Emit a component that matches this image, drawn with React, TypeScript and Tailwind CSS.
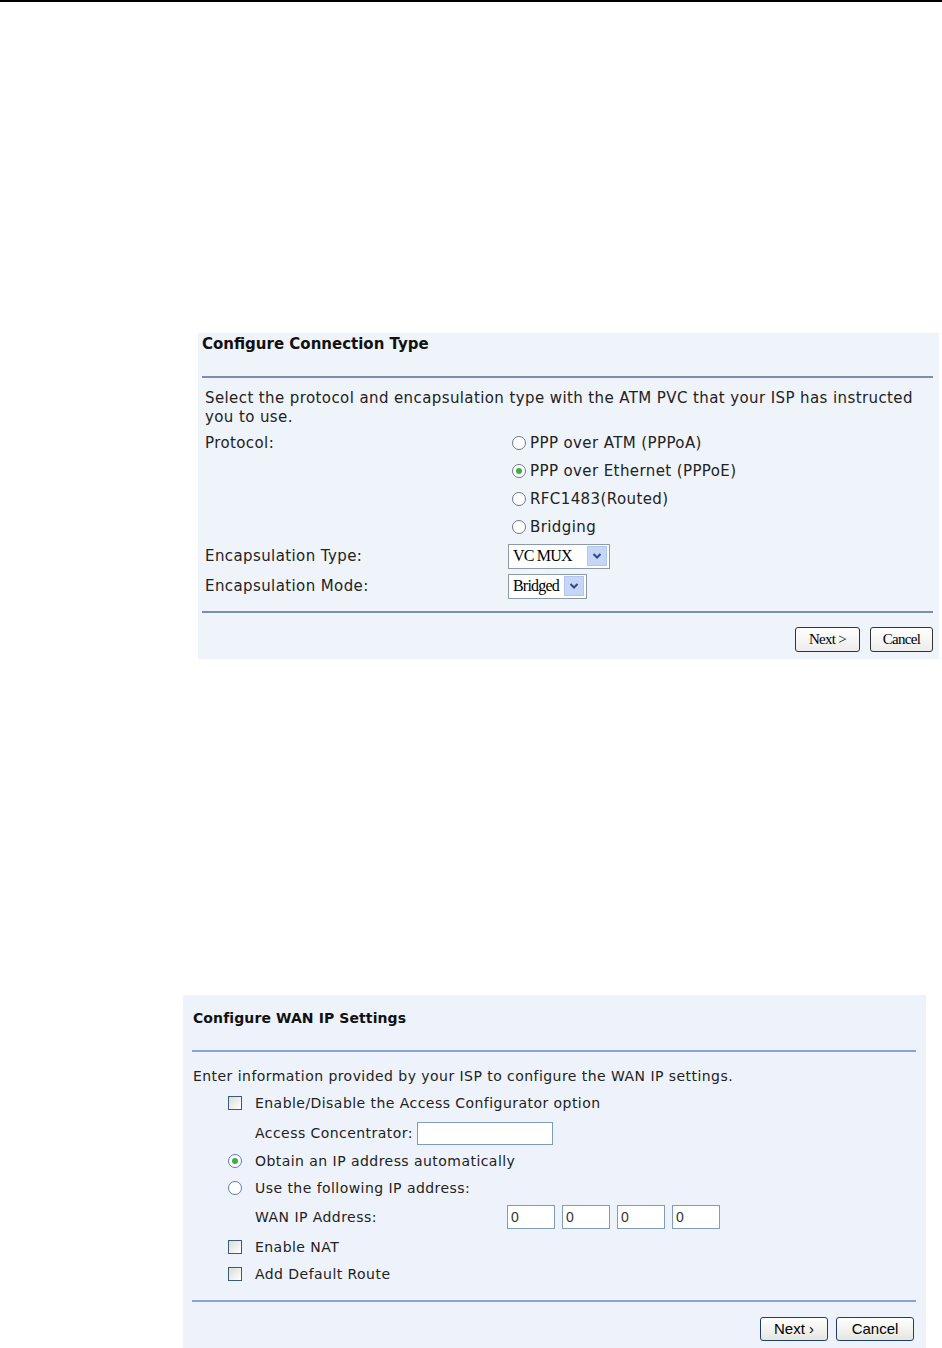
import React from "react";

const Radio = ({ checked, blue }: { checked?: boolean; blue?: boolean }) => (
  <span
    className={`inline-flex shrink-0 items-center justify-center w-[14px] h-[14px] rounded-full border bg-white ${
      blue ? "border-[#5b7fa6]" : "border-[#6f7a86]"
    }`}
  >
    {checked && <span className="w-[6px] h-[6px] rounded-full bg-[#3fae3f]" />}
  </span>
);

const Checkbox = () => (
  <span className="inline-block shrink-0 w-[14px] h-[14px] border border-[#3b5a7a] bg-gradient-to-br from-[#dcdcd6] to-[#ffffff]" />
);

const Chevron = () => (
  <svg width="10" height="8" viewBox="0 0 10 8">
    <path d="M1.5 2 L5 5.5 L8.5 2" stroke="#2a4b8c" strokeWidth="2" fill="none" />
  </svg>
);

const Select1 = ({ text, w }: { text: string; w: string }) => (
  <div className={`flex items-center h-[25px] border border-[#8a9aa8] bg-white tracking-normal ${w}`} style={{ fontFamily: '"Liberation Serif", serif' }}>
    <span className="pl-[4px] text-[16px] tracking-[-0.8px] text-black flex-1 leading-none">{text}</span>
    <span className="mr-[2px] w-[20px] h-[20px] flex items-center justify-center bg-[#c6d6f5] border border-[#b3c6ee]">
      <Chevron />
    </span>
  </div>
);

export default function App() {
  return (
    <div className="w-[942px] h-[1348px] bg-white relative overflow-hidden" style={{ fontFamily: '"DejaVu Sans", Verdana, sans-serif' }}>
      <div className="h-[2px] bg-black w-full" />

      {/* Panel 1 */}
      <div className="mt-[331px] ml-[198px] w-[741px] h-[326px] bg-[#eff3fa] flex flex-col text-[#222]">
        <div className="pl-[4px] pt-[1px] h-[43px] text-[15px] leading-[20px] font-bold text-[#111]">Configure Connection Type</div>
        <div className="ml-[4px] mr-[6px] h-[2px] bg-[#7d8fa8]" />
        <div className="mt-[11px] pl-[7px] pr-[10px] text-[15px] leading-[19px] tracking-[0.4px]">
          Select the protocol and encapsulation type with the ATM PVC that your ISP has instructed you to use.
        </div>
        <div className="mt-[2px] pl-[7px] grid grid-cols-[307px_1fr] text-[15px] tracking-[0.4px]">
          <div className="h-[28px] flex items-center">Protocol:</div>
          <div className="h-[28px] flex items-center gap-[4px]"><Radio /><span>PPP over ATM (PPPoA)</span></div>
          <div className="h-[28px]" />
          <div className="h-[28px] flex items-center gap-[4px]"><Radio checked /><span>PPP over Ethernet (PPPoE)</span></div>
          <div className="h-[28px]" />
          <div className="h-[28px] flex items-center gap-[4px]"><Radio /><span>RFC1483(Routed)</span></div>
          <div className="h-[28px]" />
          <div className="h-[28px] flex items-center gap-[4px]"><Radio /><span>Bridging</span></div>
          <div className="h-[30px] flex items-center">Encapsulation Type:</div>
          <div className="h-[30px] flex items-center ml-[-4px]"><Select1 text="VC MUX" w="w-[102px]" /></div>
          <div className="h-[30px] flex items-center">Encapsulation Mode:</div>
          <div className="h-[30px] flex items-center ml-[-4px]"><Select1 text="Bridged" w="w-[79px]" /></div>
        </div>
        <div className="mt-[10px] ml-[4px] mr-[6px] h-[2px] bg-[#7d8fa8]" />
        <div className="mt-[14px] flex justify-end gap-[10px] pr-[6px]" style={{ fontFamily: '"Liberation Serif", serif' }}>
          <button className="w-[65px] h-[25px] border border-[#333] rounded-[3px] bg-gradient-to-b from-white to-[#ececec] text-[15px] tracking-[-0.7px] text-black">Next &gt;</button>
          <button className="w-[63px] h-[25px] border border-[#333] rounded-[3px] bg-gradient-to-b from-white to-[#ececec] text-[15px] tracking-[-0.7px] text-black">Cancel</button>
        </div>
      </div>

      {/* Panel 2 */}
      <div className="mt-[336px] ml-[183px] w-[743px] h-[353px] bg-[#eef2fa] flex flex-col text-[#222]">
        <div className="pl-[10px] pt-[13px] h-[55px] text-[14px] leading-[20px] font-bold text-[#111] tracking-[0.1px]">Configure WAN IP Settings</div>
        <div className="ml-[9px] mr-[10px] h-[2px] bg-[#8ba2d8]" />
        <div className="mt-[14px] pl-[10px] text-[14px] leading-[20px] tracking-[0.45px]">
          Enter information provided by your ISP to configure the WAN IP settings.
        </div>
        <div className="mt-[3px] pl-[45px] text-[14px] tracking-[0.45px] flex flex-col">
          <div className="h-[28px] flex items-center gap-[13px]"><Checkbox /><span>Enable/Disable the Access Configurator option</span></div>
          <div className="h-[32px] flex items-center pl-[27px]">
            <span>Access Concentrator:</span>
            <span className="ml-[4px] w-[136px] h-[23px] bg-white border border-[#7f9db9]" />
          </div>
          <div className="h-[24px] flex items-center gap-[13px]"><Radio checked blue /><span>Obtain an IP address automatically</span></div>
          <div className="h-[30px] flex items-center gap-[13px]"><Radio blue /><span>Use the following IP address:</span></div>
          <div className="h-[28px] flex items-center pl-[27px]">
            <span className="w-[252px]">WAN IP Address:</span>
            <div className="flex gap-[7px]">
              {[0, 1, 2, 3].map((i) => (
                <span key={i} className="w-[48px] h-[24px] bg-white border border-[#7f9db9] flex items-center pl-[3px] text-[14px] tracking-normal text-[#333]" style={{ fontFamily: '"Liberation Sans", sans-serif' }}>0</span>
              ))}
            </div>
          </div>
          <div className="h-[32px] flex items-center gap-[13px]"><Checkbox /><span>Enable NAT</span></div>
          <div className="h-[22px] flex items-center gap-[13px]"><Checkbox /><span>Add Default Route</span></div>
        </div>
        <div className="mt-[15px] ml-[9px] mr-[10px] h-[2px] bg-[#8ba2d8]" />
        <div className="mt-[15px] flex justify-end gap-[8px] pr-[12px]" style={{ fontFamily: '"Liberation Sans", sans-serif' }}>
          <button className="w-[68px] h-[24px] border border-[#1c3f6e] rounded-[3px] bg-gradient-to-b from-white to-[#e6e6e0] text-[15px] text-black">Next &#x203A;</button>
          <button className="w-[78px] h-[24px] border border-[#1c3f6e] rounded-[3px] bg-gradient-to-b from-white to-[#e6e6e0] text-[15px] text-black">Cancel</button>
        </div>
      </div>
    </div>
  );
}
